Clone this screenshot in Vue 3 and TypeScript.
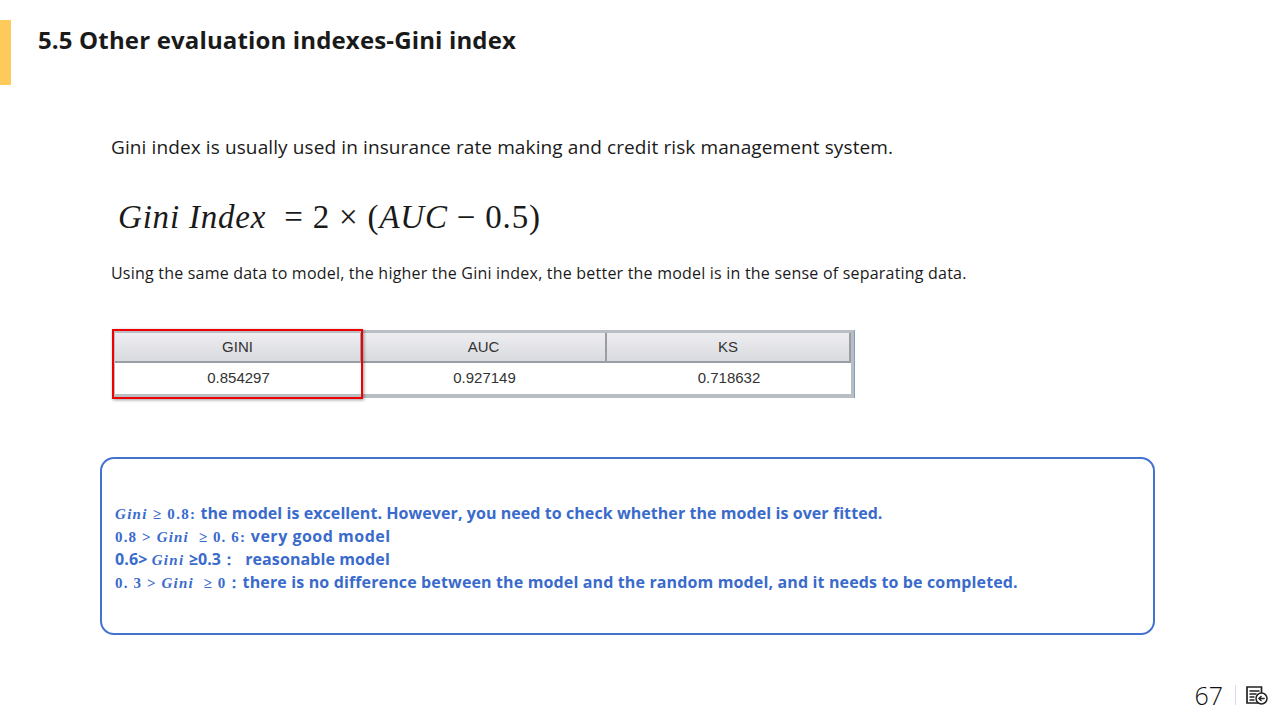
<script setup lang="ts">
const headers: string[] = ['GINI', 'AUC', 'KS']
const values: string[] = ['0.854297', '0.927149', '0.718632']
</script>

<template>
  <div class="slide">
    <header class="head">
      <div class="bar"></div>
      <h1 class="title">5.5 Other evaluation indexes-Gini index</h1>
    </header>

    <main class="content">
      <p class="intro">Gini index is usually used in insurance rate making and credit risk management system.</p>
      <p class="formula"><i>Gini Index</i>&nbsp; = 2 × (<i>AUC</i> − 0.5)</p>
      <p class="note">Using the same data to model, the higher the Gini index, the better the model is in the sense of separating data.</p>

      <div class="table-wrap">
        <div class="table">
          <div v-for="h in headers" :key="h" class="th">{{ h }}</div>
          <div v-for="v in values" :key="v" class="td">{{ v }}</div>
        </div>
        <div class="highlight"></div>
      </div>
    </main>

    <section class="box">
      <p class="line"><span class="m"><i>Gini</i> ≥ 0.8:</span> the model is excellent. However, you need to check whether the model is over fitted.</p>
      <p class="line second"><span class="m tight">0.8 &gt; <i>Gini</i>&nbsp; ≥ 0. 6:</span> very good model</p>
      <p class="line third">0.6&gt; <span class="m"><i>Gini</i></span> ≥0.3：<span class="after">reasonable model</span></p>
      <p class="line fourth"><span class="m tight">0. 3 &gt; <i>Gini</i>&nbsp; ≥ 0</span>：there is no difference between the model and the random model, and it needs to be completed.</p>
    </section>

    <footer class="foot">
      <span class="page">67</span>
      <span class="sep"></span>
      <svg class="icon" width="22" height="19" viewBox="0 0 22 19" fill="none" stroke="#222">
        <path d="M1 1h14.5v16H1z" stroke-width="1.7" />
        <path d="M3.5 5h10M3.5 8h7M3.5 11h5M3.5 14h5" stroke-width="1.4" />
        <circle cx="15.5" cy="12.5" r="5.5" fill="#fff" stroke-width="1.5" />
        <path d="M18.7 12.5h-6M15.5 10l-2.6 2.5 2.6 2.5" stroke-width="1.4" />
      </svg>
    </footer>
  </div>
</template>

<style>
html, body { margin: 0; background: #fff; }
</style>

<style scoped>
.slide {
  width: 1280px;
  height: 720px;
  overflow: hidden;
  display: flex;
  flex-direction: column;
  background: #fff;
  font-family: "Open Sans", "Noto Sans", sans-serif;
  color: #1a1a1a;
}
.head {
  display: flex;
  align-items: flex-start;
  gap: 27px;
  padding-top: 20px;
  height: 65px;
}
.bar {
  width: 11px;
  height: 65px;
  background: #fdca5b;
}
.title {
  margin: 0;
  font-size: 24px;
  line-height: 40px;
  font-weight: 700;
  letter-spacing: 0.15px;
}
.content {
  padding-left: 111px;
}
.intro {
  margin: 47px 0 0;
  font-size: 19px;
  line-height: 30px;
  letter-spacing: 0.11px;
}
.formula {
  margin: 34px 0 0 7px;
  font-family: "Liberation Serif", serif;
  font-size: 33px;
  line-height: 42px;
  letter-spacing: 0.8px;
}
.note {
  margin: 22px 0 0;
  font-size: 16px;
  line-height: 26px;
  letter-spacing: 0.21px;
}
.table-wrap {
  position: relative;
  width: max-content;
  margin-top: 44px;
}
.table {
  display: grid;
  grid-template-columns: 247px 245px 244px;
  grid-template-rows: 30px 31px;
  width: max-content;
  padding: 3px 3px 4px;
  margin-left: 1px;
  background: #b9bdc4;
  border-right: 1px solid #7f9ec4;
  font-family: "Liberation Sans", sans-serif;
  font-size: 15px;
  color: #333;
}
.th {
  display: flex;
  align-items: center;
  justify-content: center;
  padding-bottom: 1px;
  background: linear-gradient(#eeeef1, #d9dadf);
  border-right: 2px solid #9a9da3;
  border-bottom: 2px solid #9a9da3;
  box-sizing: border-box;
}
.td {
  display: flex;
  align-items: center;
  justify-content: center;
  padding-bottom: 2px;
  background: #fff;
}
.highlight {
  position: absolute;
  left: 1px;
  top: -1px;
  width: 251px;
  height: 70px;
  box-sizing: border-box;
  border: 2px solid #f00000;
  box-shadow: 1px 1px 3px rgba(0, 0, 0, 0.4);
}
.box {
  box-sizing: border-box;
  width: 1055px;
  height: 178px;
  margin: 59px 0 0 100px;
  padding: 43px 13px 0;
  border: 2px solid #4472d0;
  border-radius: 14px;
  color: #3a6bcc;
  font-size: 16px;
  font-weight: 700;
}
.line {
  margin: 0;
  height: 23px;
  line-height: 23px;
  letter-spacing: 0.07px;
  white-space: nowrap;
}
.second {
  letter-spacing: 0.5px;
}
.third {
  letter-spacing: 0.1px;
}
.fourth {
  letter-spacing: 0.14px;
}
.after {
  margin-left: 8px;
}
.m {
  font-family: "Liberation Serif", serif;
  font-size: 15px;
  line-height: 1;
  font-weight: 700;
  letter-spacing: 1.3px;
}
.tight {
  letter-spacing: 1.15px;
}
.foot {
  display: flex;
  align-items: center;
  justify-content: flex-end;
  margin-top: 45px;
  padding-right: 12px;
  height: 30px;
}
.page {
  font-size: 25px;
  font-weight: 300;
  color: #111;
  line-height: 30px;
  margin-right: 1px;
}
.sep {
  width: 1px;
  height: 20px;
  background: #d5dde8;
  margin: 0 10px 0 11px;
}
.icon {
  display: block;
}
</style>
